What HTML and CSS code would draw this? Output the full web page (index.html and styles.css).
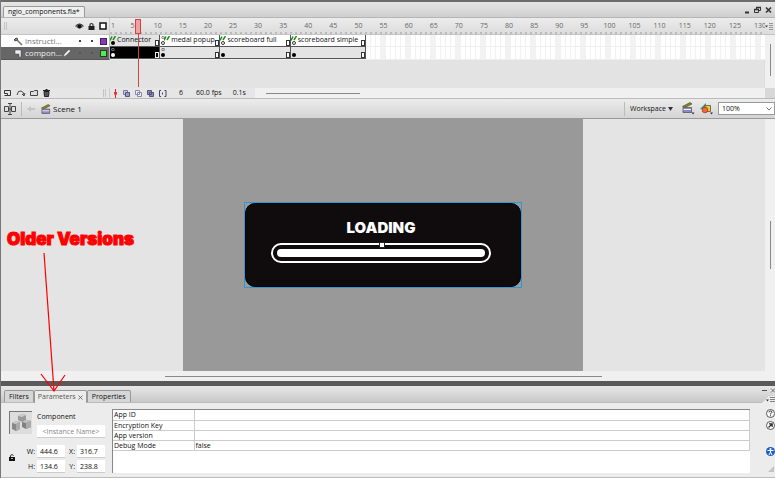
FILE: index.html
```html
<!DOCTYPE html>
<html lang="en">
<head>
<meta charset="utf-8">
<title>ngio_components.fla</title>
<link rel="stylesheet" href="styles.css">
</head>
<body>
<header class="titlebar">
  <button class="doc-tab">ngio_components.fla*</button>
  <div class="window-buttons">
    <button aria-label="Minimize"><svg width="7" height="8"><path d="M1 6.500h4" stroke="#333" stroke-width="2"/></svg></button>
    <button aria-label="Restore"><svg width="8" height="8" fill="none" stroke="#333"><path d="M2.500 3V1.500h4v3H5M.5 3.500h4v3h-4z"/><path d="M2 1.500h5M0 3.500h5" stroke-width="1.500"/></svg></button>
    <button aria-label="Close"><svg width="7" height="8"><path d="M1 1.500l5 5M6 1.500l-5 5" stroke="#333" stroke-width="1.600"/></svg></button>
  </div>
</header>

<section class="timeline">
  <div class="layer-head">
    <span class="grip"></span>
    <svg width="9" height="9"><path d="M.5 4.500Q4.500 0 8.500 4.500Q4.500 8.500 .5 4.500z" fill="#777"/><path d="M.5 4Q4.500 0 8.500 4" stroke="#222" fill="none"/><circle cx="4.500" cy="4.500" r="2" fill="#111"/></svg>
    <svg width="7" height="9"><path d="M2 4V3a1.500 1.500 0 0 1 3 0v1" fill="none" stroke="#333" stroke-width="1.200"/><path d="M.5 4h6v4h-6z" fill="#222"/></svg>
    <svg width="8" height="8"><path d="M1 1h6v6H1z" fill="#fff" stroke="#111" stroke-width="1.500"/></svg>
  </div>
  <div class="ruler" id="ruler"><span class="first">1</span></div>
  <button class="panel-menu" aria-label="Timeline menu"><svg width="9" height="7"><path d="M0 2.500h3L1.500 4.500z" fill="#444"/><path d="M4 .5h4M4 2.500h4M4 4.500h4M4 6.500h4" stroke="#999"/></svg></button>

  <div class="layer">
    <svg width="10" height="9"><path d="M1 3l2-2 2 1-2 2z" fill="#888" stroke="#444"/><path d="M4 3l5 5" stroke="#777" stroke-width="1.700"/></svg>
    <span class="layer-name">instructi...</span>
    <i class="dot"></i><i class="dot"></i><i class="swatch purple"></i>
  </div>
  <div class="frames">
    <div class="span"><svg class="flag"><use href="#flag"/></svg><b class="key"></b>Connector<i class="end"></i></div>
    <div class="span white"><svg class="flag"><use href="#flag"/></svg><b class="code">o</b><b class="key hollow"></b>medal popup<i class="end"></i></div>
    <div class="span white"><svg class="flag"><use href="#flag"/></svg><b class="key hollow"></b>scoreboard full<i class="end"></i></div>
    <div class="span white"><svg class="flag"><use href="#flag"/></svg><b class="key hollow"></b>scoreboard simple<i class="end"></i></div>
    <div class="rest"></div>
  </div>
  <div class="vscroll"><i></i></div>

  <div class="layer active">
    <svg width="10" height="9"><path d="M2 1h6v7H6V5H2z" fill="#eee" stroke="#444" stroke-width=".5"/></svg>
    <span class="layer-name">compon...</span>
    <svg class="pencil" width="8" height="8"><path d="M1 7l1-2 4-4 1 1-4 4z" fill="#fff" stroke="#ddd" stroke-width=".6"/></svg>
    <i class="dot"></i><i class="dot"></i><i class="swatch green"></i>
  </div>
  <div class="frames second">
    <div class="span selected"><b class="code">o</b><b class="key"></b><i class="end"></i></div>
    <div class="span"><b class="code">o</b><b class="key"></b><i class="end"></i></div>
    <div class="span"><b class="key"></b><i class="end"></i></div>
    <div class="span"><b class="key"></b><i class="end"></i></div>
    <div class="rest"></div>
  </div>

  <div class="empty"></div>

  <div class="layer-tools">
    <button aria-label="New layer"><svg width="8" height="8" fill="none" stroke="#333"><path d="M.5 1.500h6v5h-3v-2h-3zM.5 6.500h3" /></svg></button>
    <button aria-label="Add motion guide"><svg width="10" height="8" fill="none" stroke="#444"><path d="M1 6Q2 1 5 2t3 4M6 5l2 2 1-3" /></svg></button>
    <button aria-label="New folder"><svg width="9" height="8"><path d="M.5 2.500h3l1-1h3v5h-7z" fill="#ddd" stroke="#444"/></svg></button>
    <button aria-label="Delete layer"><svg width="7" height="8"><path d="M1 2.500h5l-.5 5h-4z" fill="#555" stroke="#222"/><path d="M0 1.500h7M2.500.5h2" stroke="#222"/></svg></button>
    <span class="grip"></span>
  </div>
  <div class="status">
    <button aria-label="Center frame"><svg width="5" height="9"><path d="M2.500 0v9" stroke="#d22"/><path d="M1 3h3v2l-1.500 2L1 5z" fill="#e33"/></svg></button>
    <button aria-label="Onion skin"><svg width="7" height="7"><path d="M.5.5h4v4h-4z" fill="#ccd" stroke="#779"/><path d="M2.500 2.500h4v4h-4z" fill="#99c" stroke="#557"/></svg></button>
    <button aria-label="Onion skin outlines"><svg width="7" height="7"><path d="M.5.5h4v4h-4zM2.500 2.500h4v4h-4z" fill="#eef" stroke="#88a"/></svg></button>
    <button aria-label="Edit multiple frames"><svg width="7" height="7"><path d="M.5.5h4v4h-4zM2.500 2.500h4v4h-4z" fill="#88b" stroke="#557"/></svg></button>
    <button aria-label="Modify onion markers"><svg width="8" height="7"><path d="M2 .5H.5v6H2M5.500.5H7v6H5.500M3.500 2.500v2" fill="none" stroke="#446"/></svg></button>
    <span class="frame-no">6</span><span class="fps">60.0 fps</span><span class="time">0.1s</span>
    <div class="hscroll"><i></i></div>
  </div>
  <div class="playhead"></div>
</section>

<nav class="editbar">
  <button aria-label="Timeline toggle"><svg width="12" height="12" fill="none" stroke="#444"><path d="M.5 3.500h4v5h-4zM7.500 3.500h4v5h-4zM6 1v10M4 .5h4M4 11.500h4M4.500 6h3"/></svg></button>
  <i class="rule"></i>
  <button aria-label="Back" disabled><svg width="9" height="8"><path d="M0 4l4-3v2h4v2H4v2z" fill="#c4c4c4"/></svg></button>
  <a class="scene" href="#scene1"><svg width="10" height="10"><use href="#clap"/></svg>Scene 1</a>
  <i class="rule right"></i>
  <button class="workspace">Workspace <svg width="5" height="4"><path d="M0 0h5L2.500 4z" fill="#333"/></svg></button>
  <button aria-label="Edit scene"><svg width="13" height="13"><use href="#clap" width="11" height="11"/><path d="M9.500 10.500h3l-1.500 2z" fill="#333"/></svg></button>
  <button aria-label="Edit symbols"><svg width="13" height="13"><path d="M0 7l6-6v7z" fill="#2a9c72"/><path d="M5 3.500h5.500v6H5z" fill="#e8d020" stroke="#555" stroke-width=".8"/><circle cx="5" cy="8" r="2.800" fill="#f26b30" stroke="#a33" stroke-width=".8"/><path d="M10 10.500h3l-1.500 2z" fill="#333"/></svg></button>
  <span class="zoom"><select aria-label="Zoom"><option>100%</option></select><svg width="6" height="4" fill="none" stroke="#555" stroke-width=".8"><path d="M.5.5L3 3 5.500.5"/></svg></span>
</nav>

<main class="workarea">
  <div class="pasteboard">
    <div class="canvas">
      <div class="component">
        <div class="loader">
          <p>LOADING</p>
          <div class="bar"><i></i></div>
        </div>
      </div>
    </div>
  </div>
  <div class="vscroll stage"><i></i></div>
</main>
<div class="bottom-scroll"><i></i></div>

<section class="inspector">
  <div class="tabs">
    <button>Filters</button><button class="on">Parameters <svg width="5" height="5"><path d="M.5.5l4 4M4.500.5l-4 4" stroke="#555" stroke-width=".8"/></svg></button><button>Properties</button>
    <div class="panel-controls">
      <svg width="13" height="5" fill="none" stroke="#555"><path d="M0 2.500h5"/><path d="M9 .5l4 4M13 .5l-4 4" stroke-width=".8"/></svg>
      <svg class="corner" width="14" height="7"><path d="M0 7Q3 6 5 3t5-3h4v7z" fill="#ececec"/><path d="M5 3.500h3L6.500 5.500z" fill="#333"/><path d="M9 1.500h5M9 3.500h5M9 5.500h5" stroke="#666" stroke-width=".8"/></svg>
    </div>
  </div>
  <div class="panel">
    <div class="identity">
      <div class="cubes"><svg width="22" height="22"><path d="M8 4l4-2 4 1v5l-4 2-4-2z" fill="#999"/><path d="M8 4l4-2 4 1-4 2z" fill="#ccc"/><path d="M2 11l4-2 4 1v7l-4 2-4-2z" fill="#888"/><path d="M2 11l4-2 4 1-4 2z" fill="#ccc"/><path d="M6 12l4-2v7l-4 2z" fill="#aaa"/><path d="M12 10l4-2 5 1v6l-5 2-4-2z" fill="#808080"/><path d="M12 10l4-2 5 1-5 2z" fill="#c4c4c4"/><path d="M16 11l5-2v6l-5 2z" fill="#aaa"/></svg></div>
      <div class="naming">
        <label for="inst">Component</label>
        <input id="inst" type="text" placeholder="&lt;Instance Name&gt;">
      </div>
      <button class="lock" aria-label="Lock aspect ratio"><svg width="6" height="9"><path d="M1.500 4V2.500q1.500-2 3 0" fill="none" stroke="#222"/><path d="M0 4h6v4H0z" fill="#111"/><path d="M2 5.500h2" stroke="#aaa"/></svg></button>
      <div class="dims">
        <label for="w">W:</label><input id="w" value="444.6"><label for="x">X:</label><input id="x" value="316.7">
        <label for="h">H:</label><input id="h" value="134.6"><label for="y">Y:</label><input id="y" value="238.8">
      </div>
    </div>
    <div class="params">
      <table>
        <tr><th>App ID</th><td></td></tr>
        <tr><th>Encryption Key</th><td></td></tr>
        <tr><th>App version</th><td></td></tr>
        <tr><th>Debug Mode</th><td>false</td></tr>
      </table>
    </div>
    <div class="side">
      <button aria-label="Help"><svg width="9" height="9" fill="none" stroke="#333"><circle cx="4.500" cy="4.500" r="4" fill="#fff" stroke-width=".8"/><path d="M3 3.500q0-1.500 1.500-1.500T6 3.300Q6 4 4.500 4.700V5.500M4.500 6.300v1"/></svg></button>
      <button aria-label="Open component inspector"><svg width="9" height="9" fill="none" stroke="#333"><circle cx="4.500" cy="4.500" r="4" fill="#fff" stroke-width=".8"/><path d="M2.500 6.500l3.500-3.500M3 2.800h3.200V6" stroke-width="1.200"/></svg></button>
      <button class="access" aria-label="Accessibility"><svg width="9" height="9"><circle cx="4.500" cy="4.500" r="4.500" fill="#1f5fc4"/><circle cx="4.500" cy="2" r="1" fill="#fff"/><path d="M1.500 3.500h6M4.500 3.500v2M4.500 5L3 8M4.500 5L6 8" stroke="#fff"/></svg></button>
      <svg class="resize" width="7" height="7"><path d="M6 0v6H0z" fill="#c4c4c4"/></svg>
    </div>
  </div>
</section>

<div class="note">
  <strong>Older Versions</strong>
  <svg width="30" height="142" fill="none" stroke="#f00" stroke-width="1.200"><path d="M4 1L14 139M1 122l13 17 11-16"/></svg>
</div>

<svg class="defs">
  <symbol id="flag" viewBox="0 0 6 5"><path d="M0 4.500L2 .5M3 4L5.500 0" stroke="#189018" stroke-width="1.500"/></symbol>
  <symbol id="clap" viewBox="0 0 11 11"><path d="M.5 4.500L8 .5l2 1.500-6 3z" fill="#8a842a" stroke="#55511a" stroke-width=".7"/><path d="M1 5.500h8.500v5H1z" fill="#8a8ac4" stroke="#556" stroke-width=".8"/><path d="M1.500 7.500h7.500" stroke="#eef"/></symbol>
</svg>
<script src="ruler.js"></script>
</body>
</html>
```
FILE: styles.css
```css
* { box-sizing: border-box; }
body {
  margin: 0;
  min-height: 100vh;
  display: flex;
  flex-direction: column;
  border-left: 1px solid #777;
  background: #ececec;
  color: #111;
  font: 7px/10px "Open Sans", "Noto Sans", sans-serif;
  overflow: hidden;
}
button, input, select {
  font: inherit;
  color: inherit;
  background: none;
  border: 0;
  padding: 0;
  margin: 0;
}
button { display: flex; align-items: center; }
svg { flex: none; display: block; }
.defs { position: absolute; width: 0; height: 0; }

.titlebar {
  display: flex;
  align-items: flex-end;
  justify-content: space-between;
  height: 18px;
  border-top: 2px solid #6b6b6b;
  border-bottom: 1px solid #b5b5b5;
  background: linear-gradient(#e6e6e6, #cfcfcf);
}
.doc-tab {
  height: 11px;
  margin-left: 2px;
  padding: 0 4px;
  border: 1px solid #999;
  border-bottom: 0;
  border-radius: 2px 2px 0 0;
  background: #efefef;
}
.window-buttons { display: flex; gap: 3px; padding: 0 3px 3px 0; }

.timeline {
  position: relative;
  display: grid;
  grid-template-columns: 109px 1fr 10px;
  grid-template-rows: 17px 12px 13px 28px 11px;
  background: #e3e3e3;
}
.layer-head, .ruler, .panel-menu {
  background: linear-gradient(#ececec, #dcdcdc);
  border-bottom: 1px solid #c4c4c4;
}
.layer-head { display: flex; align-items: center; gap: 4px; padding: 0 2px 0 3px; border-right: 1px solid #ccc; }
.grip { width: 3px; height: 8px; border: solid #c4c4c4; border-width: 0 1px; }
.layer-head .grip { margin-right: auto; }
.ruler {
  position: relative;
  display: grid;
  grid-template-columns: repeat(26, 5fr) 0.5fr;
  overflow: hidden;
  color: #666;
  line-height: 16px;
}
.ruler::after {
  content: "";
  position: absolute;
  inset: auto 0 0;
  height: 2px;
  background: repeating-linear-gradient(90deg, #bbb 0 2px, transparent 2px 5px);
}
.mark { display: flex; justify-content: flex-end; }
.mark span { width: 5px; display: flex; justify-content: center; }
.first { position: absolute; left: 1px; }
.layer {
  display: flex;
  align-items: center;
  padding: 0 2px 0 12px;
  background: #fff;
  border-right: 1px solid #bbb;
  color: #777;
}
.layer-name { margin: 0 auto 0 2px; }
.layer-name, .scene { font-size: 8px; }
.active { background: #666; color: #eee; border-bottom: 1px solid #555; }
.pencil { margin-right: 8px; }
.dot { width: 2px; height: 2px; margin-right: 10px; background: #444; }
.dot + .swatch { margin-left: -3px; }
.active .dot { background: #555; }
.swatch { width: 7px; height: 7px; border: 1px solid #333; }
.purple { background: #9a2bd2; }
.green { background: #4bf04b; }
.frames {
  display: grid;
  grid-template-columns: 10fr 12fr 14fr 15fr 79.5fr;
  border-bottom: 1px solid #eee;
}
.span {
  position: relative;
  min-width: 0;
  padding-left: 7px;
  white-space: nowrap;
  line-height: 9px;
  background: #e4e4e4;
  border: solid #555;
  border-width: 0 1px 1px 0;
  margin-bottom: -1px;
}
.span.white { background: #fff; }
.span.white:nth-child(2) { padding-left: 11px; }
.span.selected { background: #000; }
.flag { position: absolute; left: 0; top: 1px; width: 6px; height: 5px; }
.span:nth-child(2) .flag { left: 4px; }
.key { position: absolute; left: 1px; bottom: 1px; width: 4px; height: 4px; border-radius: 50%; background: #000; }
.key.hollow { background: #fff; border: 1px solid #333; }
.selected .key { background: #fff; }
.selected .end { background: none; border-color: #eee; }
.code { position: absolute; left: 1px; top: 0; font-size: 6px; line-height: 5px; font-weight: normal; }
.selected .code { color: #ccc; }
.end { position: absolute; right: 0; bottom: 0; width: 4px; height: 6px; border: 1px solid #333; background: #fff; }
.rest {
  background:
    repeating-linear-gradient(90deg, transparent 0 15px, #f2f2f2 15px 20px, transparent 20px 25px),
    repeating-linear-gradient(90deg, #fff 0 4px, #f2f2f2 4px 5px);
}
.vscroll { grid-row: 2 / 5; grid-column: 3; display: flex; justify-content: center; background: #f0f0f0; }
.vscroll i { width: 1px; background: #888; margin: 9px 0 12px; }
.frames.second .span { border-bottom: 1px solid #555; margin-bottom: 0; }
.empty { grid-column: 1 / 3; border-right: 1px solid #ddd; }
.layer-tools, .status { border-bottom: 1px solid #bbb; background: #e6e6e6; display: flex; align-items: center; }
.layer-tools { gap: 4px; padding: 0 3px; border-right: 1px solid #ccc; }
.layer-tools .grip { margin-left: auto; }
.status { grid-column: 2 / 4; gap: 5px; padding-left: 3px; }
.frame-no { margin-left: 7px; }
.fps { margin-left: 8px; }
.time { margin-left: 6px; }
.hscroll { flex: 1; align-self: stretch; margin-left: 4px; padding: 5px 11px; border-right: 10px solid #d8d8d8; background: #f0f0f0; }
.hscroll i { display: block; width: 94px; height: 1px; background: #888; }
.playhead { position: absolute; left: 134px; top: 1px; width: 6px; height: 15px; border: 1px solid #c44; background: #f3a0a0; }
.playhead::after { content: ""; position: absolute; left: 2px; top: 13px; width: 1px; height: 54px; background: #c44; }

.editbar {
  display: flex;
  align-items: center;
  gap: 5px;
  height: 20px;
  padding-left: 3px;
  background: linear-gradient(#ececec, #d4d4d4);
  border-bottom: 1px solid #999;
}
.rule { width: 1px; height: 14px; background: #bbb; }
.rule.right { margin-left: auto; }
.scene { display: flex; align-items: center; gap: 2px; color: inherit; text-decoration: none; }
.workspace { gap: 2px; margin-right: 4px; }
.zoom { position: relative; width: 57px; height: 13px; border: 1px solid #999; background: #fff; }
.zoom select { appearance: none; width: 100%; height: 11px; padding-left: 3px; display: block; }
.zoom svg { position: absolute; right: 2px; top: 4px; }

.workarea { flex: 1; display: flex; min-height: 200px; }
.pasteboard { flex: 1; display: flex; justify-content: center; background: #e4e4e4; }
.canvas { flex: 0 1 400px; display: flex; align-items: center; justify-content: center; background: #999; }
.component { border: 1px solid #2c98d8; }
.loader {
  width: 276px;
  padding: 16px 30px 23px 26px;
  border-radius: 10px;
  border: 1px solid #000;
  background: #100c0d;
  color: #fff;
  text-align: center;
}
.loader p { margin: 0 0 7px; font: 900 15px/16px Inter, "Liberation Sans", sans-serif; }
.bar { position: relative; height: 20px; margin: 0 -1px; padding: 4px; border: 2px solid #fff; border-radius: 10px; }
.bar::before { content: ""; position: absolute; left: 106px; top: -3px; width: 4px; height: 4px; border: 1px solid #222; background: #fff; }
.bar i { display: block; height: 8px; border-radius: 4px; background: #fff; }
.vscroll.stage { width: 10px; }
.vscroll.stage i { height: 48px; margin: 102px 0 0; }
.bottom-scroll { height: 10px; padding: 5px 164px; background: #f0f0f0; }
.bottom-scroll i { display: block; width: 437px; height: 1px; background: #888; }

.inspector { border-top: 5px solid #5a5a5a; border-bottom: 1px solid #bbb; }
.tabs { display: flex; align-items: flex-end; height: 17px; background: linear-gradient(#e8e8e8, #c8c8c8); border-bottom: 1px solid #bbb; padding-left: 3px; }
.tabs button { height: 12px; padding: 0 4px; gap: 2px; border: 1px solid #999; border-bottom: 0; border-radius: 2px 2px 0 0; background: #d6d6d6; white-space: nowrap; }
.tabs .on { height: 13px; margin: 0 0 -1px; padding: 0 3px; background: #ececec; color: #555; }
.panel-controls { display: flex; flex-direction: column; align-items: flex-end; gap: 3px; margin-left: auto; }
.corner { margin-bottom: -1px; }
.panel { display: flex; height: 74px; padding: 6px 0 4px 8px; }
.identity { display: grid; grid-template-columns: 16px 12px 1fr; grid-template-rows: 32px 1fr; width: 103px; flex: none; }
.cubes { grid-column: 1 / 3; width: 23px; height: 23px; margin-top: 2px; border: solid #777; border-width: 1px 0 0 1px; background: #ddd; }
.naming { display: flex; flex-direction: column; gap: 3px; min-width: 0; padding: 3px 7px 0 0; }
input { min-width: 0; background: #fff; border-bottom: 1px solid #ccc; }
#inst { width: 100%; height: 13px; text-align: center; }
#inst::placeholder { color: #888; }
.lock { align-self: center; }
.dims { grid-column: 2 / 4; display: grid; grid-template-columns: 12px 28px 12px 28px; grid-template-rows: 13px 13px; gap: 2px 0; padding-top: 4px; line-height: 13px; text-align: right; }
.dims label { padding-right: 2px; white-space: nowrap; }
.dims input { padding-left: 3px; }
.params { flex: 1; background: #fff; border: solid #888; border-width: 1px 0 0 1px; }
table { width: 100%; table-layout: fixed; border-collapse: collapse; }
th, td { height: 10px; padding: 0 0 0 1px; border-bottom: 1px solid #ccc; border-right: 1px solid #ccc; font-weight: normal; text-align: left; line-height: 9px; }
th { width: 81px; }
.side { display: flex; flex-direction: column; align-items: flex-end; gap: 3px; width: 25px; }
.access { margin-top: 14px; }
.resize { margin-top: auto; }

.note { position: absolute; left: 7px; top: 229px; color: #f00; pointer-events: none; }
.note strong { display: block; font: 900 17px/20px Inter, "Liberation Sans", sans-serif; -webkit-text-stroke: 1px; white-space: nowrap; }
.note svg { margin: 3px 0 0 33px; }
```
FILE: ruler.js
```js
const ruler = document.getElementById("ruler");
for (let frame = 5; frame <= 130; frame += 5) {
  const mark = document.createElement("div");
  mark.className = "mark";
  const label = document.createElement("span");
  label.textContent = frame;
  mark.append(label);
  ruler.append(mark);
}
```
